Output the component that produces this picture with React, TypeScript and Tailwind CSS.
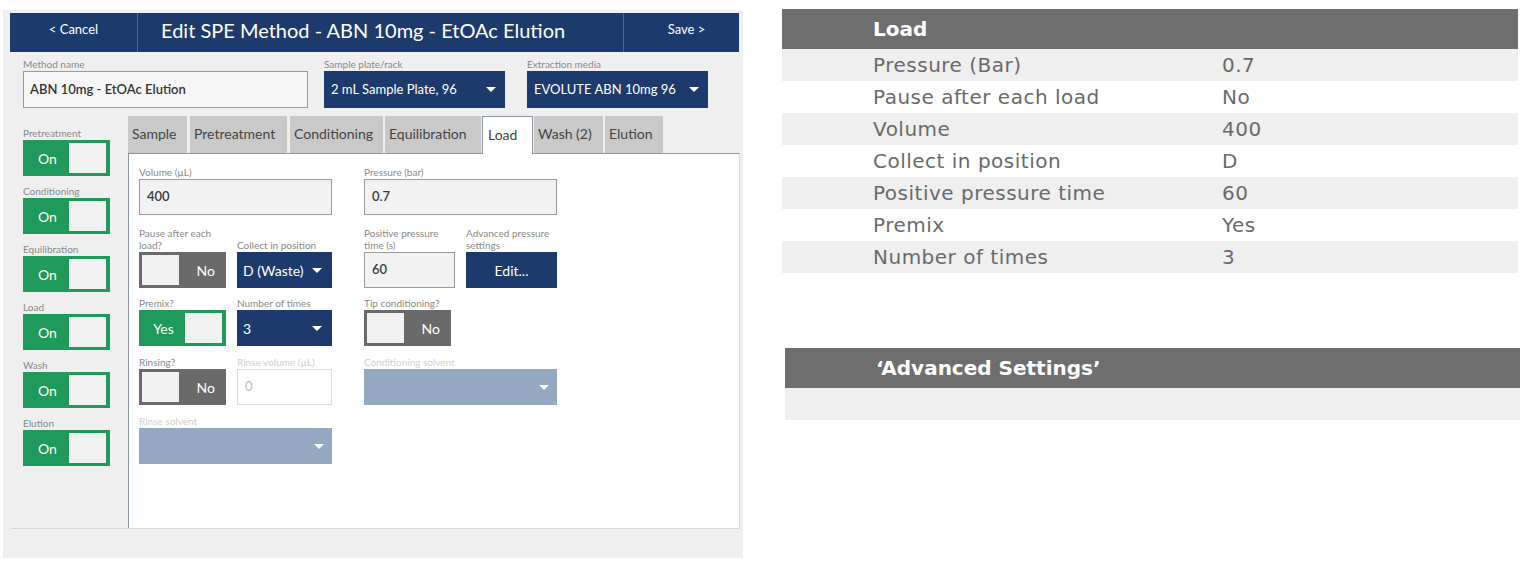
import React from 'react'

function Caret({ className = '' }: { className?: string }) {
  return (
    <svg width="10" height="5" viewBox="0 0 10 5" className={className}>
      <path d="M0 0h10L5 5z" fill="currentColor" />
    </svg>
  )
}

function Label({ children, disabled }: { children: React.ReactNode; disabled?: boolean }) {
  return (
    <div className={disabled ? 'text-[10px] leading-[12px] text-[#cfcfcf] mb-[1px]' : 'text-[10px] leading-[12px] text-[#8a8a8a] mb-[1px]'}>
      {children}
    </div>
  )
}

function Toggle({ on, text }: { on: boolean; text: string }) {
  if (on) {
    return (
      <div className="w-[87px] h-[36px] bg-[#1f9a5b] flex items-center p-[3px] pr-[4px]">
        <span className="flex-1 text-center text-white text-[14px]">{text}</span>
        <span className="w-[37px] h-full bg-[#f1f1f1]" />
      </div>
    )
  }
  return (
    <div className="w-[87px] h-[36px] bg-[#6a6a6a] flex items-center p-[3px]">
      <span className="w-[37px] h-full bg-[#f1f1f1]" />
      <span className="flex-1 text-right pr-[8px] text-white text-[14px]">{text}</span>
    </div>
  )
}

function TextBox({ value, w }: { value: string; w: string }) {
  return (
    <div className={`${w} h-[36px] border border-[#9a9a9a] bg-[#f2f2f2] flex items-center pl-[7px] text-[13px] font-semibold text-[#3a3a3a]`}>
      {value}
    </div>
  )
}

function Select({ value, w }: { value: string; w: string }) {
  return (
    <div className={`${w} h-[36px] bg-[#1c3a6b] text-white flex items-center justify-between pl-[6px] pr-[10px] text-[14px]`}>
      <span>{value}</span>
      <Caret />
    </div>
  )
}

function DisabledSelect({ w }: { w: string }) {
  return (
    <div className={`${w} h-[36px] bg-[#94a9c1] text-white flex items-center justify-end pr-[8px]`}>
      <Caret />
    </div>
  )
}

const sideItems = ['Pretreatment', 'Conditioning', 'Equilibration', 'Load', 'Wash', 'Elution']

const tabs = [
  { name: 'Sample', cls: 'w-[59px] ml-0' },
  { name: 'Pretreatment', cls: 'w-[97px] ml-[3px]' },
  { name: 'Conditioning', cls: 'w-[93px] ml-[3px]' },
  { name: 'Equilibration', cls: 'w-[96px] ml-[2px]' },
  { name: 'Load', cls: 'w-[51px] ml-[1px]', active: true },
  { name: 'Wash (2)', cls: 'w-[69px] ml-[1px]' },
  { name: 'Elution', cls: 'w-[58px] ml-[2px]' },
]

function LeftApp() {
  return (
    <div className="ml-[3px] mt-[10px] w-[740px] h-[548px] bg-[#efefef] flex flex-col font-['Lato',sans-serif]">
      {/* header */}
      <div className="mt-[3px] ml-[7px] w-[729px] h-[39px] bg-[#1c3a6b] flex text-white">
        <div className="w-[128px] border-r border-[#4b6796] flex items-center justify-center pb-[5px] text-[13px]">&lt; Cancel</div>
        <div className="flex-1 flex items-center pl-[23px] pb-[6px] text-[20px]">Edit SPE Method - ABN 10mg - EtOAc Elution</div>
        <div className="w-[116px] border-l border-[#4b6796] flex items-center justify-center pl-[10px] pb-[5px] text-[13px]">Save &gt;</div>
      </div>

      {/* top fields */}
      <div className="flex pl-[20px] mt-[6px]">
        <div className="w-[285px]">
          <Label>Method name</Label>
          <div className="h-[37px] border border-[#9a9a9a] bg-[#f6f6f6] flex items-center pl-[6px] text-[13px] font-semibold text-[#333]">
            ABN 10mg - EtOAc Elution
          </div>
        </div>
        <div className="w-[181px] ml-[16px]">
          <Label>Sample plate/rack</Label>
          <div className="h-[37px] bg-[#1c3a6b] text-white flex items-center justify-between pl-[7px] pr-[9px] text-[13px]">
            <span>2 mL Sample Plate, 96</span>
            <Caret />
          </div>
        </div>
        <div className="w-[181px] ml-[22px]">
          <Label>Extraction media</Label>
          <div className="h-[37px] bg-[#1c3a6b] text-white flex items-center justify-between pl-[7px] pr-[9px] text-[13px]">
            <span>EVOLUTE ABN 10mg 96</span>
            <Caret />
          </div>
        </div>
      </div>

      {/* body */}
      <div className="mt-[8px] flex flex-col flex-1">
        <div className="flex h-[412px]">
          <div className="w-[125px] pl-[20px] pt-[11px] flex flex-col">
            {sideItems.map((s) => (
              <div key={s} className="mb-[9px]">
                <Label>{s}</Label>
                <Toggle on text="On" />
              </div>
            ))}
          </div>

          <div className="w-[612px] flex flex-col">
            <div className="flex h-[37px]">
              {tabs.map((t) => (
                <div
                  key={t.name}
                  className={
                    t.active
                      ? `${t.cls} relative z-10 h-[38px] bg-white border border-b-0 border-[#8c96a3] flex items-center pl-[5px] pb-[3px] text-[14px] text-[#444]`
                      : `${t.cls} h-[37px] bg-[#c9c9c9] flex items-center pl-[4px] pb-[3px] text-[14px] text-[#444]`
                  }
                >
                  {t.name}
                </div>
              ))}
            </div>
            <div className="flex-1 bg-white border-l border-t border-[#8c96a3] border-r-[#dcdcdc] border-r pt-[12px] pl-[10px]">
              {/* row 1 */}
              <div className="flex items-end">
                <div>
                  <Label>Volume (µL)</Label>
                  <TextBox value="400" w="w-[193px]" />
                </div>
                <div className="ml-[32px]">
                  <Label>Pressure (bar)</Label>
                  <TextBox value="0.7" w="w-[193px]" />
                </div>
              </div>
              {/* row 2 */}
              <div className="flex items-end mt-[12px]">
                <div>
                  <Label>Pause after each<br />load?</Label>
                  <Toggle on={false} text="No" />
                </div>
                <div className="ml-[11px]">
                  <Label>Collect in position</Label>
                  <Select value="D (Waste)" w="w-[95px]" />
                </div>
                <div className="ml-[32px]">
                  <Label>Positive pressure<br />time (s)</Label>
                  <TextBox value="60" w="w-[91px]" />
                </div>
                <div className="ml-[11px]">
                  <Label>Advanced pressure<br />settings</Label>
                  <div className="w-[91px] h-[36px] bg-[#1c3a6b] text-white flex items-center justify-center text-[14px]">Edit...</div>
                </div>
              </div>
              {/* row 3 */}
              <div className="flex items-end mt-[9px]">
                <div>
                  <Label>Premix?</Label>
                  <Toggle on text="Yes" />
                </div>
                <div className="ml-[11px]">
                  <Label>Number of times</Label>
                  <Select value="3" w="w-[95px]" />
                </div>
                <div className="ml-[32px]">
                  <Label>Tip conditioning?</Label>
                  <Toggle on={false} text="No" />
                </div>
              </div>
              {/* row 4 */}
              <div className="flex items-end mt-[10px]">
                <div>
                  <Label>Rinsing?</Label>
                  <Toggle on={false} text="No" />
                </div>
                <div className="ml-[11px]">
                  <Label disabled>Rinse volume (µL)</Label>
                  <div className="w-[95px] h-[36px] border border-[#dedede] bg-white flex items-center pl-[7px] text-[13px] text-[#bdbdbd]">0</div>
                </div>
                <div className="ml-[32px]">
                  <Label disabled>Conditioning solvent</Label>
                  <DisabledSelect w="w-[193px]" />
                </div>
              </div>
              {/* row 5 */}
              <div className="flex items-end mt-[10px]">
                <div>
                  <Label disabled>Rinse solvent</Label>
                  <DisabledSelect w="w-[193px]" />
                </div>
              </div>
            </div>
          </div>
        </div>
        <div className="flex-1 ml-[8px] mr-[3px] border-t border-[#d6d6d6]" />
      </div>
    </div>
  )
}

const loadRows: [string, string][] = [
  ['Pressure (Bar)', '0.7'],
  ['Pause after each load', 'No'],
  ['Volume', '400'],
  ['Collect in position', 'D'],
  ['Positive pressure time', '60'],
  ['Premix', 'Yes'],
  ['Number of times', '3'],
]

function RightTables() {
  return (
    <div className="ml-[39px] font-['DejaVu_Sans',Verdana,sans-serif] text-[20px]">
      <div className="mt-[9px] w-[736px]">
        <div className="h-[40px] bg-[#6e6e6e] flex items-center pl-[91px] text-white font-bold">Load</div>
        {loadRows.map(([k, v], i) => (
          <div key={k} className={i % 2 === 0 ? 'h-[32px] bg-[#efefef] flex items-center text-[#6a6a6a] tracking-[0.5px]' : 'h-[32px] bg-white flex items-center text-[#6a6a6a] tracking-[0.5px]'}>
            <span className="w-[440px] pl-[91px]">{k}</span>
            <span>{v}</span>
          </div>
        ))}
      </div>
      <div className="mt-[75px] ml-[3px] w-[735px]">
        <div className="h-[40px] bg-[#6e6e6e] flex items-center pl-[91px] text-white font-bold">‘Advanced Settings’</div>
        <div className="h-[32px] bg-[#efefef]" />
      </div>
    </div>
  )
}

export default function App() {
  return (
    <div className="w-[1530px] h-[562px] bg-white flex">
      <LeftApp />
      <RightTables />
    </div>
  )
}
